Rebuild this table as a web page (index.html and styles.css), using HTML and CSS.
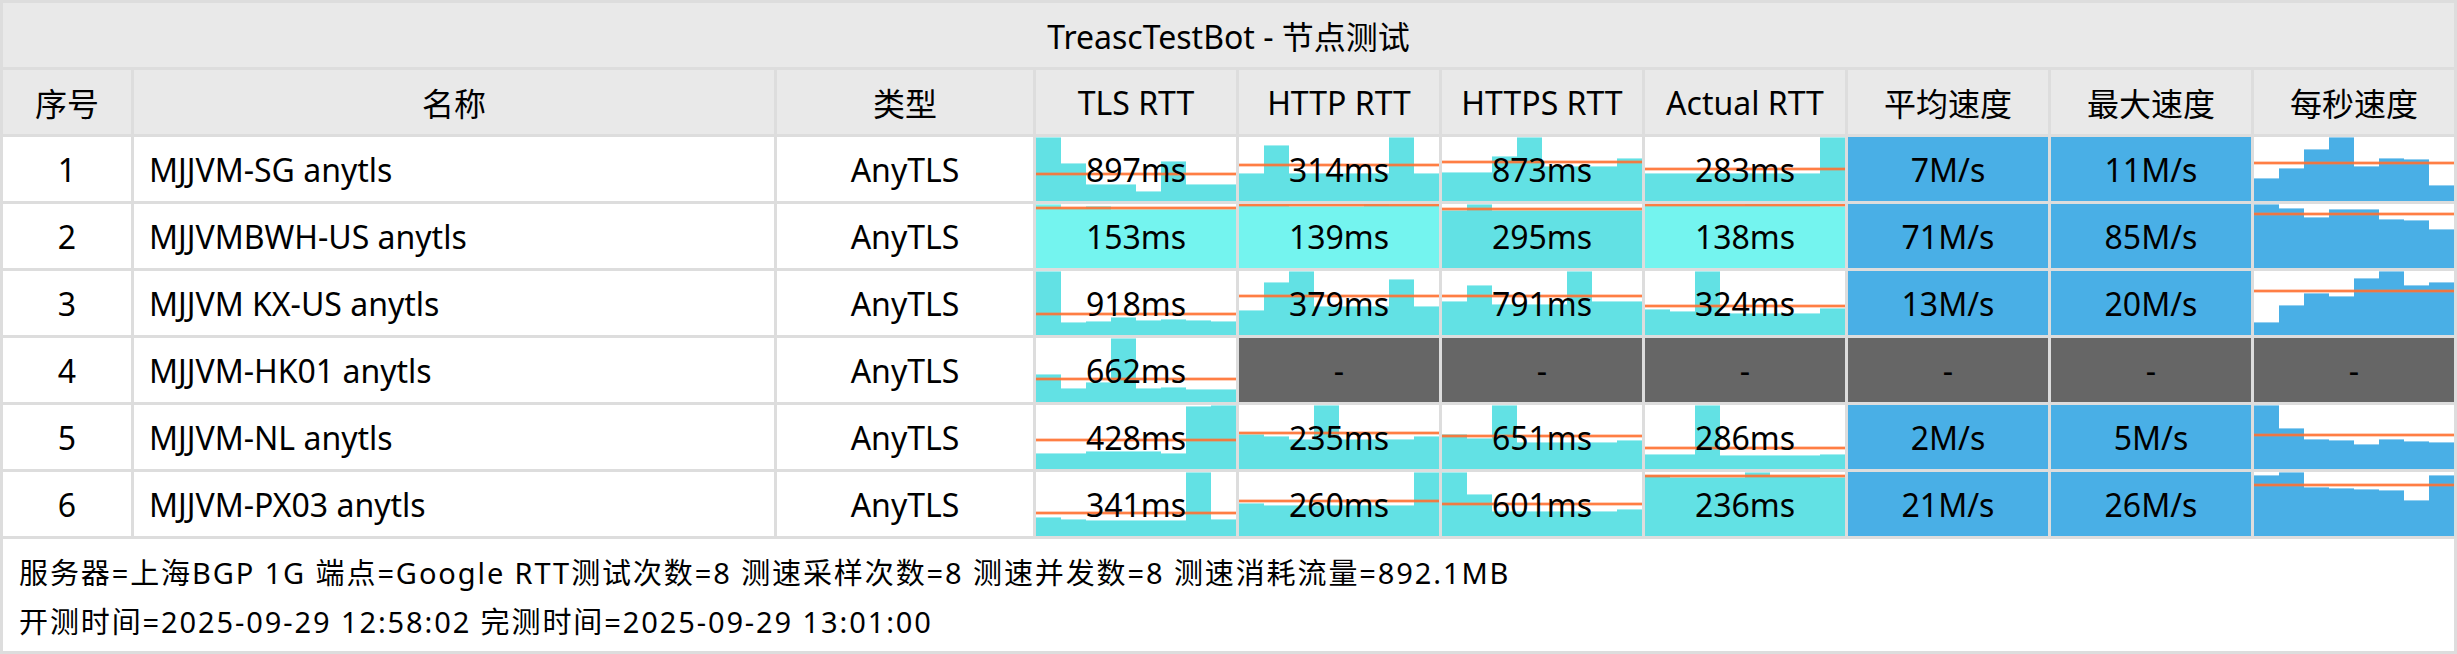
FILE: index.html
```html
<!DOCTYPE html>
<html lang="zh">
<head>
<meta charset="utf-8">
<title>TreascTestBot - 节点测试</title>
<link rel="stylesheet" href="styles.css">
</head>
<body>
<div class="report">
  <div class="title">TreascTestBot - 节点测试</div>

  <div class="th">序号</div>
  <div class="th">名称</div>
  <div class="th">类型</div>
  <div class="th">TLS RTT</div>
  <div class="th">HTTP RTT</div>
  <div class="th">HTTPS RTT</div>
  <div class="th">Actual RTT</div>
  <div class="th">平均速度</div>
  <div class="th">最大速度</div>
  <div class="th">每秒速度</div>

  <div class="td">1</div>
  <div class="td name">MJJVM-SG anytls</div>
  <div class="td">AnyTLS</div>
  <div class="chart rtt" data-bars="64,38,17,17,10,40,17,17"><span class="val">897ms</span></div>
  <div class="chart rtt" data-bars="28,56,28,28,28,28,64,28"><span class="val">314ms</span></div>
  <div class="chart rtt" data-bars="29,29,45,64,35,35,35,43"><span class="val">873ms</span></div>
  <div class="chart rtt" data-bars="28,28,28,28,28,28,28,64"><span class="val">283ms</span></div>
  <div class="td speed">7M/s</div>
  <div class="td speed">11M/s</div>
  <div class="chart spd" data-bars="22.7,33.3,52,64,35,43,42,15.7"></div>

  <div class="td">2</div>
  <div class="td name">MJJVMBWH-US anytls</div>
  <div class="td">AnyTLS</div>
  <div class="chart rtt fast" data-bars="64,60,62,59.5,59.5,59.5,59.5,59.5"><span class="val">153ms</span></div>
  <div class="chart rtt fast" data-bars="63,63,62,62,62,64,63,63"><span class="val">139ms</span></div>
  <div class="chart rtt" data-bars="58,64,58,58,58,58,58,58"><span class="val">295ms</span></div>
  <div class="chart rtt fast" data-bars="63,63,63,63,64,63,63,62"><span class="val">138ms</span></div>
  <div class="td speed">71M/s</div>
  <div class="td speed">85M/s</div>
  <div class="chart spd" data-bars="64,60,51.3,59,59.3,49.3,48,39.3"></div>

  <div class="td">3</div>
  <div class="td name">MJJVM KX-US anytls</div>
  <div class="td">AnyTLS</div>
  <div class="chart rtt" data-bars="64,12.7,13.7,18.3,15,15.7,15,14"><span class="val">918ms</span></div>
  <div class="chart rtt" data-bars="25,53,64,29,29,29,56,29"><span class="val">379ms</span></div>
  <div class="chart rtt" data-bars="34,50,31,31,31,64,34,34"><span class="val">791ms</span></div>
  <div class="chart rtt" data-bars="26,24,64,22,22,22,22,27"><span class="val">324ms</span></div>
  <div class="td speed">13M/s</div>
  <div class="td speed">20M/s</div>
  <div class="chart spd" data-bars="12.7,30,42,39.3,57.3,64,50,53.3"></div>

  <div class="td">4</div>
  <div class="td name">MJJVM-HK01 anytls</div>
  <div class="td">AnyTLS</div>
  <div class="chart rtt" data-bars="28.3,13.7,20,64,14,14.7,13.3,13.3"><span class="val">662ms</span></div>
  <div class="td na">-</div>
  <div class="td na">-</div>
  <div class="td na">-</div>
  <div class="td na">-</div>
  <div class="td na">-</div>
  <div class="td na">-</div>

  <div class="td">5</div>
  <div class="td name">MJJVM-NL anytls</div>
  <div class="td">AnyTLS</div>
  <div class="chart rtt" data-bars="16.3,15.7,18,18,18,15.7,63,64"><span class="val">428ms</span></div>
  <div class="chart rtt" data-bars="35,33.3,30,64,30,30,30,32.7"><span class="val">235ms</span></div>
  <div class="chart rtt" data-bars="35,31,64,27,27,27,27,29"><span class="val">651ms</span></div>
  <div class="chart rtt" data-bars="15,15,64,14.5,14.5,14.5,14.5,15"><span class="val">286ms</span></div>
  <div class="td speed">2M/s</div>
  <div class="td speed">5M/s</div>
  <div class="chart spd" data-bars="64,40.7,30,29,25,30,27.7,26.7"></div>

  <div class="td">6</div>
  <div class="td name">MJJVM-PX03 anytls</div>
  <div class="td">AnyTLS</div>
  <div class="chart rtt" data-bars="18.7,17,16,16,16,16,64,17"><span class="val">341ms</span></div>
  <div class="chart rtt" data-bars="32.7,31,31,31,31,31,31,64"><span class="val">260ms</span></div>
  <div class="chart rtt" data-bars="64,42,25,25,25,25,25,26.7"><span class="val">601ms</span></div>
  <div class="chart rtt" data-bars="61.5,59.5,59.5,59.5,64,60,60,59.5"><span class="val">236ms</span></div>
  <div class="td speed">21M/s</div>
  <div class="td speed">26M/s</div>
  <div class="chart spd" data-bars="60.7,64,48.7,47.7,47,46,35.7,60.7"></div>

  <div class="footer">
    <div>服务器=上海BGP 1G 端点=Google RTT测试次数=8 测速采样次数=8 测速并发数=8 测速消耗流量=892.1MB</div>
    <div>开测时间=2025-09-29 12:58:02 完测时间=2025-09-29 13:01:00</div>
  </div>
</div>
<script src="script.js"></script>
</body>
</html>
```

FILE: styles.css
```css
html, body {
  margin: 0;
  padding: 0;
  background: #ffffff;
}

.report {
  display: grid;
  grid-template-columns: 128px 640px 256px repeat(7, 200px);
  grid-template-rows: 64px 64px repeat(6, 64px) 112px;
  gap: 3px;
  padding: 3px;
  width: 2457px;
  height: 654px;
  box-sizing: border-box;
  background: #dddddd;
  font-family: "Noto Sans", "Noto Sans CJK SC", sans-serif;
  font-size: 32px;
  color: #000000;
}

.title {
  grid-column: 1 / -1;
  background: #e9e9e9;
  display: flex;
  align-items: center;
  justify-content: center;
}

.th {
  background: #e9e9e9;
  display: flex;
  align-items: center;
  justify-content: center;
}

.td {
  background: #ffffff;
  display: flex;
  align-items: center;
  justify-content: center;
  white-space: nowrap;
}

.td.name {
  justify-content: flex-start;
  padding-left: 15px;
}

.td.speed {
  background: #49afe6;
}

.td.na {
  background: #666666;
}

.chart {
  display: grid;
  position: relative;
  overflow: hidden;
  background: #ffffff;
  --bar: #62e1e4;
  --bar-top: #a6eef0;
}

.chart.fast {
  --bar: #74f4ef;
  --bar-top: #a9f8f5;
}

.chart.spd {
  --bar: #49afe6;
  --bar-top: #93cff0;
}

.chart > .bars,
.chart > .val {
  grid-area: 1 / 1;
}

.bars {
  display: flex;
  align-items: flex-end;
}

.bar {
  flex: 1;
  box-sizing: border-box;
  background: var(--bar);
  border-top: 1px solid var(--bar-top);
}

.avg {
  position: absolute;
  left: 0;
  right: 0;
  height: 2px;
  margin-bottom: -1px;
  background: rgba(255, 112, 48, 0.9);
  box-shadow: 0 1px 0 rgba(255, 120, 60, 0.35), 0 -1px 0 rgba(255, 120, 60, 0.35);
}

.val {
  align-self: center;
  justify-self: center;
  position: relative;
  z-index: 1;
  white-space: nowrap;
}

.footer {
  grid-column: 1 / -1;
  background: #ffffff;
  padding: 9px 16px 0;
  font-size: 29px;
  letter-spacing: 1.9px;
  line-height: 49px;
  white-space: nowrap;
}
```

FILE: script.js
```js
document.querySelectorAll('.chart').forEach(function (cell) {
  var values = cell.dataset.bars.split(',').map(Number);
  var bars = document.createElement('div');
  bars.className = 'bars';
  values.forEach(function (h) {
    var bar = document.createElement('div');
    bar.className = 'bar';
    bar.style.height = (h / 64 * 100) + '%';
    bars.appendChild(bar);
  });
  var sum = values.reduce(function (a, b) { return a + b; }, 0);
  var avg = sum / values.length;
  var line = document.createElement('div');
  line.className = 'avg';
  line.style.bottom = (avg / 64 * 100) + '%';
  cell.insertBefore(line, cell.firstChild);
  cell.insertBefore(bars, cell.firstChild);
});
```
